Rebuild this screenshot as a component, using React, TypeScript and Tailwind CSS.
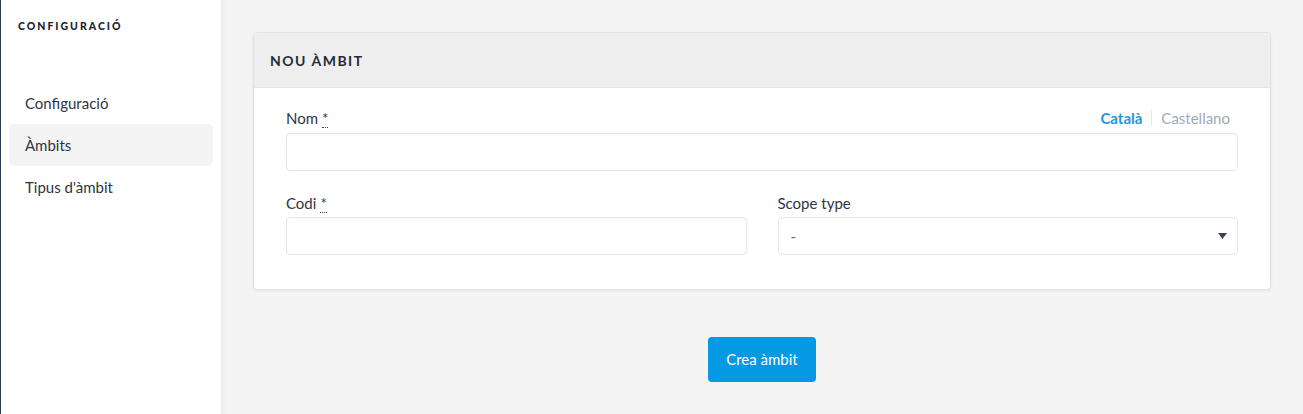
const navItems = [
  { label: 'Configuració', active: false },
  { label: 'Àmbits', active: true },
  { label: "Tipus d'àmbit", active: false },
];

const Required = () => (
  <abbr title="Obligatori" className="ml-1 border-b border-dotted border-[#3a4252] no-underline">
    *
  </abbr>
);

const App = () => {
  return (
    <div className="flex h-[414px] w-full bg-[#f4f4f4] font-['Lato','Noto_Sans',sans-serif] text-[15px] text-[#2f3542]">
      <aside className="relative z-10 flex w-[221px] shrink-0 flex-col border-l border-[#2d3a4b] bg-white shadow-[3px_0_6px_rgba(0,0,0,0.04)]">
        <h2 className="mt-[19px] pl-[17px] text-[10.5px] font-black tracking-[2px] text-[#1c2230]">CONFIGURACIÓ</h2>
        <nav className="mt-[47px] flex flex-col px-2">
          {navItems.map((item) => (
            <a
              key={item.label}
              className={`flex h-[42px] items-center rounded-[5px] px-4 text-[15px] text-[#2f3542] ${
                item.active ? 'bg-[#f4f4f4]' : ''
              }`}
            >
              {item.label}
            </a>
          ))}
        </nav>
      </aside>

      <main className="flex flex-1 flex-col items-center p-8">
        <div className="w-full rounded-[4px] border border-[#e3e3e3] bg-white shadow-[0_1px_3px_rgba(0,0,0,0.08)]">
          <div className="flex h-[55px] items-center rounded-t-[4px] border-b border-[#e4e4e4] bg-[#eeeeee] px-4">
            <h1 className="text-[14px] font-bold tracking-[1.5px] text-[#252b38]">NOU ÀMBIT</h1>
          </div>
          <div className="px-8 pt-5 pb-[34px]">
            <div className="flex h-5 items-center justify-between">
              <label className="leading-5">
                Nom
                <Required />
              </label>
              <div className="mr-[8px] flex items-center text-[15px] leading-5">
                <span className="font-bold text-[#1a98de]">Català</span>
                <span className="mx-[9px] h-4 w-px bg-[#e6e6e6]" />
                <span className="text-[#a2aab8]">Castellano</span>
              </div>
            </div>
            <input className="mt-[5px] block h-[38px] w-full rounded-[4px] border border-[#e6e6e6] bg-white shadow-[inset_0_1px_2px_rgba(0,0,0,0.03)] outline-none" />

            <div className="mt-[22px] grid grid-cols-2 gap-[31px]">
              <div>
                <label className="block leading-5">
                  Codi
                  <Required />
                </label>
                <input className="mt-[4px] block h-[38px] w-full rounded-[4px] border border-[#e6e6e6] bg-white shadow-[inset_0_1px_2px_rgba(0,0,0,0.03)] outline-none" />
              </div>
              <div>
                <label className="block leading-5">Scope type</label>
                <div className="mt-[4px] flex h-[38px] w-full items-center justify-between rounded-[4px] border border-[#e6e6e6] bg-white pl-[12px] pr-[10px]">
                  <span className="text-[#5a6270]">-</span>
                  <svg width="9" height="6" viewBox="0 0 9 6" className="text-[#3b4352]">
                    <path d="M0 0h9L4.5 6z" fill="currentColor" />
                  </svg>
                </div>
              </div>
            </div>
          </div>
        </div>

        <button className="mt-[47px] h-[45px] w-[108px] rounded-[4px] bg-[#0599e3] text-[15px] text-white">
          Crea àmbit
        </button>
      </main>
    </div>
  );
};

export default App;
